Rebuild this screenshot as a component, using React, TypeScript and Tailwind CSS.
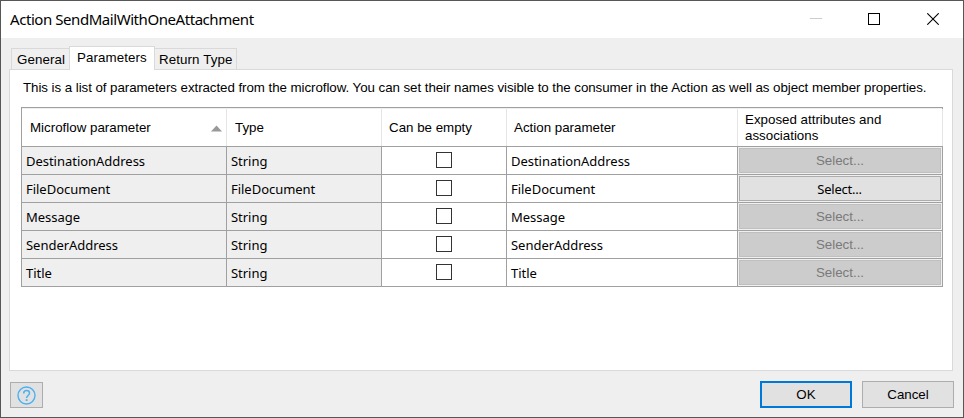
type Row = { name: string; type: string; enabled: boolean };

const rows: Row[] = [
  { name: 'DestinationAddress', type: 'String', enabled: false },
  { name: 'FileDocument', type: 'FileDocument', enabled: true },
  { name: 'Message', type: 'String', enabled: false },
  { name: 'SenderAddress', type: 'String', enabled: false },
  { name: 'Title', type: 'String', enabled: false },
];

const columns = 'grid grid-cols-[204px_154px_124px_230px_204px] gap-x-px';

function TitleBar() {
  return (
    <header className="flex h-[37px] shrink-0 items-center justify-between bg-white pr-6 pl-[9px]">
      <h1 className="pb-0.5 font-['Noto_Sans','Open_Sans',sans-serif] text-[15px] leading-5 tracking-[-0.44px] whitespace-nowrap">
        Action SendMailWithOneAttachment
      </h1>
      <div className="flex items-center pb-px">
        <svg width="12" height="12" viewBox="0 0 12 12" shapeRendering="crispEdges">
          <path d="M0 5.5H12" stroke="#cccccc" />
        </svg>
        <svg className="ml-[46px]" width="12" height="12" viewBox="0 0 12 12" shapeRendering="crispEdges">
          <rect x="0.5" y="0.5" width="11" height="11" fill="none" stroke="#000" />
        </svg>
        <svg className="ml-[47px]" width="12" height="12" viewBox="0 0 12 12">
          <path d="M0.3 0.3L11.7 11.7M11.7 0.3L0.3 11.7" stroke="#000" strokeWidth="1.1" />
        </svg>
      </div>
    </header>
  );
}

function Tabs() {
  return (
    <div className="relative z-10 -mb-px flex items-end pl-0.5 text-[13.33px] leading-4 whitespace-nowrap">
      <div className="mb-px flex h-[21px] w-[58px] items-center border border-r-0 border-b-0 border-[#d9d9d9] pt-px pl-[5px] tracking-[0.1px]">General</div>
      <div className="flex h-6 w-[86px] items-center border border-b-0 border-[#d9d9d9] bg-white pl-[7px]">
        <span className="pb-0.5 tracking-[0.1px]">Parameters</span>
      </div>
      <div className="mb-px flex h-[21px] w-[82px] items-center border border-b-0 border-l-0 border-[#d9d9d9] pt-px pl-1 tracking-[0.1px]">Return Type</div>
    </div>
  );
}

function HeaderRow() {
  return (
    <div className={`${columns} h-[38px] border-t border-[#f0f0f0] bg-white text-[13.33px] leading-4 whitespace-nowrap`}>
      <div className="flex items-center justify-between pr-[3px] pl-2">
        <span className="pt-px">Microflow parameter</span>
        <svg width="12" height="7" viewBox="0 0 12 7" className="mt-0.5">
          <path d="M0 6.5L5.5 0.5L11 6.5Z" fill="#999" />
        </svg>
      </div>
      <div className="-ml-px flex items-center border-l border-[#e5e5e5] pt-px pl-2">Type</div>
      <div className="-ml-px flex items-center border-l border-[#e5e5e5] pt-px pl-[7px]">Can be empty</div>
      <div className="-ml-px flex items-center border-l border-[#e5e5e5] pt-px pl-[7px]">Action parameter</div>
      <div className="-mx-px flex items-center border-x border-[#e5e5e5] pl-[7px]">
        <span>
          Exposed attributes and
          <br />
          associations
        </span>
      </div>
    </div>
  );
}

function DataRow({ row }: { row: Row }) {
  const cell = "flex items-center font-['Noto_Sans','Open_Sans',sans-serif] text-[13px] leading-4 tracking-[-0.03px] pl-1 pt-px whitespace-nowrap";
  return (
    <div className={`${columns} h-[27px] bg-[#a0a0a0]`}>
      <div className={`${cell} bg-[#efefef]`}>{row.name}</div>
      <div className={`${cell} bg-[#efefef]`}>{row.type}</div>
      <div className="flex items-start justify-center bg-white pt-[5px]">
        <div className="size-4 border border-[#333] bg-white" />
      </div>
      <div className={`${cell} bg-white`}>{row.name}</div>
      <div className="flex bg-[#f0f0f0] p-px">
        {row.enabled ? (
          <button className="w-full border border-[#adadad] bg-[#e1e1e1] pr-px font-['Noto_Sans','Open_Sans',sans-serif] text-[13px] leading-4 tracking-[-0.25px]">Select...</button>
        ) : (
          <button className="w-full border border-[#bfbfbf] bg-[#cccccc] text-[13.33px] leading-4 text-[#7a7a7a]">Select...</button>
        )}
      </div>
    </div>
  );
}

function Footer() {
  return (
    <footer className="flex items-end justify-between pt-2.5 pl-px text-[13.33px] leading-4">
      <button aria-label="Help" className="flex h-[26px] w-[33px] items-center justify-center border border-[#adadad] bg-[#e1e1e1]">
        <svg width="20" height="20" viewBox="0 0 20 20" fill="none" stroke="#4cb0f0" className="-mb-px">
          <circle cx="9.5" cy="9.5" r="8.5" strokeWidth="1.4" />
          <path d="M6.7 7.5C6.7 5.6 8 4.6 9.6 4.6S12.5 5.7 12.5 7.3C12.5 9.4 9.6 9.6 9.6 12" strokeWidth="1.5" />
          <path d="M9.6 13.2V15" strokeWidth="1.8" />
        </svg>
      </button>
      <div className="flex gap-2.5">
        <button className="h-[27px] w-[92px] border-2 border-[#0078d7] bg-[#e1e1e1]">OK</button>
        <button className="h-[27px] w-[92px] border border-[#adadad] bg-[#e1e1e1]">Cancel</button>
      </div>
    </footer>
  );
}

export default function App() {
  return (
    <div className="flex h-[418px] w-[964px] flex-col border border-[#565656] bg-[#efefef] font-['Liberation_Sans',Arial,sans-serif] text-black">
      <TitleBar />
      <main className="flex flex-1 flex-col pt-2 pr-[9px] pl-2">
        <Tabs />
        <section className="mr-px h-[302px] border border-[#d9d9d9] bg-white pt-[10px] pl-[11px]">
          <p className="ml-0.5 text-[13.33px] leading-4 tracking-[-0.059px] whitespace-nowrap">
            This is a list of parameters extracted from the microflow. You can set their names visible to the consumer in the Action as well as object member properties.
          </p>
          <div className="mt-[11px] flex w-[922px] flex-col gap-px border border-[#a0a0a0] bg-[#a0a0a0]">
            <HeaderRow />
            {rows.map((row) => (
              <DataRow key={row.name} row={row} />
            ))}
          </div>
        </section>
        <Footer />
      </main>
    </div>
  );
}
